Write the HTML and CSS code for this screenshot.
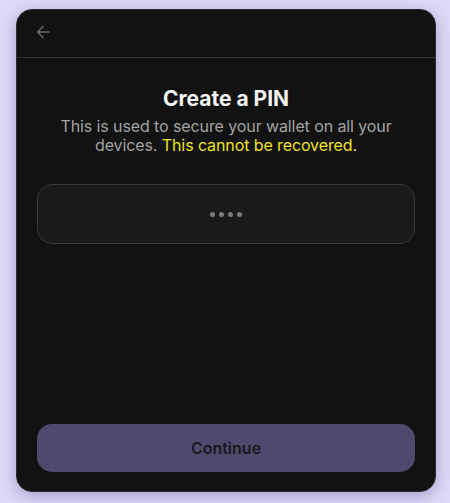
FILE: index.html
```html
<!DOCTYPE html>
<html>
<head>
<meta charset="utf-8">
<link rel="stylesheet" href="styles.css">
</head>
<body>
<div class="card">
  <div class="header">
    <button class="back" aria-label="Back">
      <svg width="16" height="16" viewBox="0 0 16 16" fill="none" stroke="#6b6b6b" stroke-width="1.5" stroke-linecap="round" stroke-linejoin="round">
        <path d="M14 8H2.5M8 2.5L2.5 8L8 13.5"/>
      </svg>
    </button>
  </div>
  <div class="body">
    <h1 class="title">Create a PIN</h1>
    <p class="subtitle">This is used to secure your wallet on all your devices. <span class="warn">This cannot be recovered.</span></p>
    <div class="pin">
      <span class="dot"></span><span class="dot"></span><span class="dot"></span><span class="dot"></span>
    </div>
    <button class="continue">Continue</button>
  </div>
</div>
</body>
</html>
```
FILE: styles.css
```css
html, body {
  margin: 0;
  padding: 0;
}
body {
  background: #dddaf8;
  font-family: Inter, "Noto Sans", sans-serif;
  height: 503px;
  overflow: hidden;
}
.card {
  box-sizing: border-box;
  margin: 9px 0 0 16px;
  width: 420px;
  height: 483px;
  background: #121212;
  border: 1px solid #2c2c2e;
  border-radius: 16px;
  box-shadow: 0 4px 16px rgba(60, 50, 120, 0.35);
  display: flex;
  flex-direction: column;
  overflow: hidden;
}
.header {
  height: 47px;
  border-bottom: 1px solid #333333;
  display: flex;
  align-items: center;
  padding-left: 18px;
  flex-shrink: 0;
}
.back {
  background: none;
  border: 0;
  padding: 0;
  width: 16px;
  height: 16px;
  display: flex;
  margin-top: -3px;
}
.body {
  flex: 1;
  display: flex;
  flex-direction: column;
  align-items: center;
  padding: 28px 20px 19px;
}
.title {
  margin: 0;
  font-size: 21px;
  line-height: 25px;
  font-weight: 700;
  color: #f5f5f5;
}
.subtitle {
  margin: 6px 0 0;
  font-size: 16px;
  line-height: 19px;
  letter-spacing: -0.1px;
  color: #a3a3a3;
  text-align: center;
  padding: 0 10px;
}
.warn {
  color: #f1e31f;
}
.pin {
  box-sizing: border-box;
  margin-top: 29px;
  width: 100%;
  height: 60px;
  background: #1a1a1a;
  border: 1px solid #3a3a3a;
  border-radius: 15px;
  display: flex;
  align-items: center;
  justify-content: center;
  gap: 4px;
}
.dot {
  width: 5px;
  height: 5px;
  border-radius: 50%;
  background: #7a7a7d;
}
.continue {
  margin-top: auto;
  width: 100%;
  height: 48px;
  border: 0;
  border-radius: 15px;
  background: #4f4a6d;
  color: #19171f;
  font-family: Inter, "Noto Sans", sans-serif;
  font-size: 16px;
  font-weight: 600;
}
```
